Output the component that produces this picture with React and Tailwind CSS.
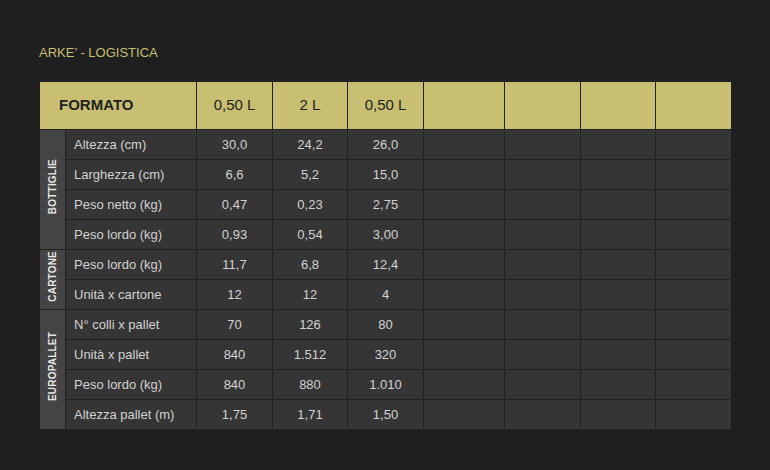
import React from "react";

const COLS = ["0,50 L", "2 L", "0,50 L", "", "", "", ""];
const WIDTHS = [76, 75, 76, 81, 76, 75, 76];

const GROUPS = [
  {
    name: "BOTTIGLIE",
    rows: [
      ["Altezza (cm)", "30,0", "24,2", "26,0"],
      ["Larghezza (cm)", "6,6", "5,2", "15,0"],
      ["Peso netto (kg)", "0,47", "0,23", "2,75"],
      ["Peso lordo (kg)", "0,93", "0,54", "3,00"],
    ],
  },
  {
    name: "CARTONE",
    rows: [
      ["Peso lordo (kg)", "11,7", "6,8", "12,4"],
      ["Unità x cartone", "12", "12", "4"],
    ],
  },
  {
    name: "EUROPALLET",
    rows: [
      ["N° colli x pallet", "70", "126", "80"],
      ["Unità x pallet", "840", "1.512", "320"],
      ["Peso lordo (kg)", "840", "880", "1.010"],
      ["Altezza pallet (m)", "1,75", "1,71", "1,50"],
    ],
  },
];

export default function App() {
  return (
    <div
      className="min-h-[470px] w-[770px] bg-[#1f1f1f] px-[39px] pt-[43px]"
      style={{ fontFamily: '"Liberation Sans", Arial, sans-serif' }}
    >
      <h1 className="text-[13px] leading-5 text-[#c8bf72]">ARKE’ - LOGISTICA</h1>

      <table className="mt-[18px] w-[692px] table-fixed border-collapse">
        <colgroup>
          <col className="w-[26px]" />
          <col className="w-[131px]" />
          {WIDTHS.map((w, i) => (
            <col key={i} style={{ width: w }} />
          ))}
        </colgroup>
        <thead>
          <tr className="h-[48px] bg-[#c8bf72] text-[#222]">
            <th
              colSpan={2}
              className="border border-[#222] border-t-[#1f1f1f] border-l-[#1f1f1f] pl-[19px] text-left text-[15px] font-bold"
            >
              FORMATO
            </th>
            {COLS.map((c, i) => (
              <th
                key={i}
                className="border border-[#222] border-t-[#1f1f1f] text-center text-[15px] font-normal last:border-r-[#1f1f1f]"
              >
                {c}
              </th>
            ))}
          </tr>
        </thead>
        <tbody className="text-[13px] text-[#d2d2d2]">
          {GROUPS.map((g) =>
            g.rows.map((r, ri) => (
              <tr key={g.name + ri} className="h-[30px] bg-[#353535]">
                {ri === 0 && (
                  <td
                    rowSpan={g.rows.length}
                    className="border border-[#222] border-l-[#1f1f1f] bg-[#444] p-0 text-center align-middle"
                  >
                    <span className="inline-block rotate-180 text-[10px] font-bold tracking-[0.2px] text-[#e6e6e6] [writing-mode:vertical-rl]">
                      {g.name}
                    </span>
                  </td>
                )}
                <td className="border border-[#222] pl-2 text-left">{r[0]}</td>
                {WIDTHS.map((_, ci) => (
                  <td key={ci} className="border border-[#222] text-center last:border-r-[#1f1f1f]">
                    {r[ci + 1] || ""}
                  </td>
                ))}
              </tr>
            ))
          )}
        </tbody>
      </table>
    </div>
  );
}
